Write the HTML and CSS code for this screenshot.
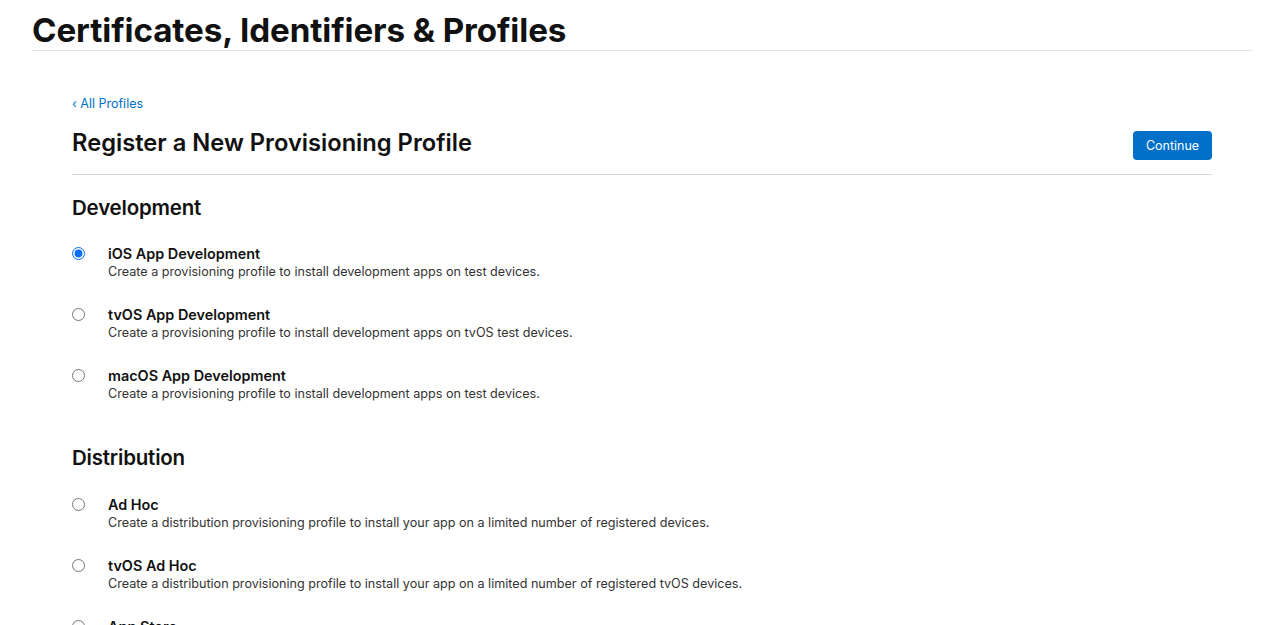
FILE: index.html
```html
<!DOCTYPE html>
<html>
	<head>
		<meta charset="UTF-8">
		<title>Register a New Provisioning Profile</title>
		<link rel="stylesheet" href="styles.css">
	</head>
	<body>
		<div class="page">
			<h1 class="site-title">Certificates, Identifiers &amp; Profiles</h1>

			<div class="content">
				<a class="back" href="#">&lsaquo; All Profiles</a>
				<div class="head">
					<h2>Register a New Provisioning Profile</h2>
					<button class="btn">Continue</button>
				</div>

				<section class="group">
					<h3>Development</h3>
					<label class="option">
						<input type="radio" name="type" checked>
						<span class="text">
							<span class="name">iOS App Development</span>
							<span class="desc">Create a provisioning profile to install development apps on test devices.</span>
						</span>
					</label>
					<label class="option">
						<input type="radio" name="type">
						<span class="text">
							<span class="name">tvOS App Development</span>
							<span class="desc">Create a provisioning profile to install development apps on tvOS test devices.</span>
						</span>
					</label>
					<label class="option">
						<input type="radio" name="type">
						<span class="text">
							<span class="name">macOS App Development</span>
							<span class="desc">Create a provisioning profile to install development apps on test devices.</span>
						</span>
					</label>
				</section>

				<section class="group">
					<h3>Distribution</h3>
					<label class="option">
						<input type="radio" name="type">
						<span class="text">
							<span class="name">Ad Hoc</span>
							<span class="desc">Create a distribution provisioning profile to install your app on a limited number of registered devices.</span>
						</span>
					</label>
					<label class="option">
						<input type="radio" name="type">
						<span class="text">
							<span class="name">tvOS Ad Hoc</span>
							<span class="desc">Create a distribution provisioning profile to install your app on a limited number of registered tvOS devices.</span>
						</span>
					</label>
					<label class="option">
						<input type="radio" name="type">
						<span class="text">
							<span class="name">App Store</span>
							<span class="desc">Create a distribution provisioning profile to submit your app to the App Store.</span>
						</span>
					</label>
				</section>
			</div>
		</div>
	</body>
</html>
```

FILE: styles.css
```css
* {
	margin: 0;
	padding: 0;
	box-sizing: border-box;
}

body {
	font-family: Inter, "Liberation Sans", sans-serif;
	color: #1d1d1f;
	background: #FFFFFF;
}

.page {
	padding: 0 35px 0 32px;
}

.site-title {
	font-size: 33.2px;
	font-weight: 700;
	letter-spacing: -0.1px;
	line-height: 40px;
	padding-top: 10px;
	border-bottom: 1px solid #E5E5E5;
	color: #111111;
}

.content {
	padding: 45px 40px 0;
}

.back {
	display: block;
	font-size: 12.5px;
	line-height: 16px;
	color: #0070C9;
	text-decoration: none;
}

.head {
	display: flex;
	justify-content: space-between;
	align-items: center;
	padding: 13px 0 14px;
	border-bottom: 1px solid #D6D6D6;
}

.head h2 {
	font-size: 23.7px;
	font-weight: 600;
	letter-spacing: 0;
	line-height: 32px;
	color: #111111;
}

.btn {
	font-family: inherit;
	font-size: 12.5px;
	color: #FFFFFF;
	background: #0070C9;
	border: none;
	border-radius: 4px;
	width: 79px;
	height: 29px;
	margin-top: 6px;
}

.group h3 {
	font-size: 20.5px;
	font-weight: 600;
	line-height: 28px;
	letter-spacing: -0.2px;
	padding-top: 19px;
	margin-bottom: 23px;
	color: #111111;
}

.group + .group h3 {
	padding-top: 16px;
	margin-bottom: 24px;
}

.option {
	display: flex;
	align-items: flex-start;
	height: 61px;
}

.option input {
	width: 13px;
	height: 13px;
	margin: 2px 23px 0 0;
	accent-color: #0A6CFF;
}

.text {
	display: flex;
	flex-direction: column;
}

.name {
	font-size: 14.4px;
	font-weight: 600;
	line-height: 18px;
	color: #111111;
}

.desc {
	font-size: 12.6px;
	line-height: 18px;
	color: #333333;
}
```
